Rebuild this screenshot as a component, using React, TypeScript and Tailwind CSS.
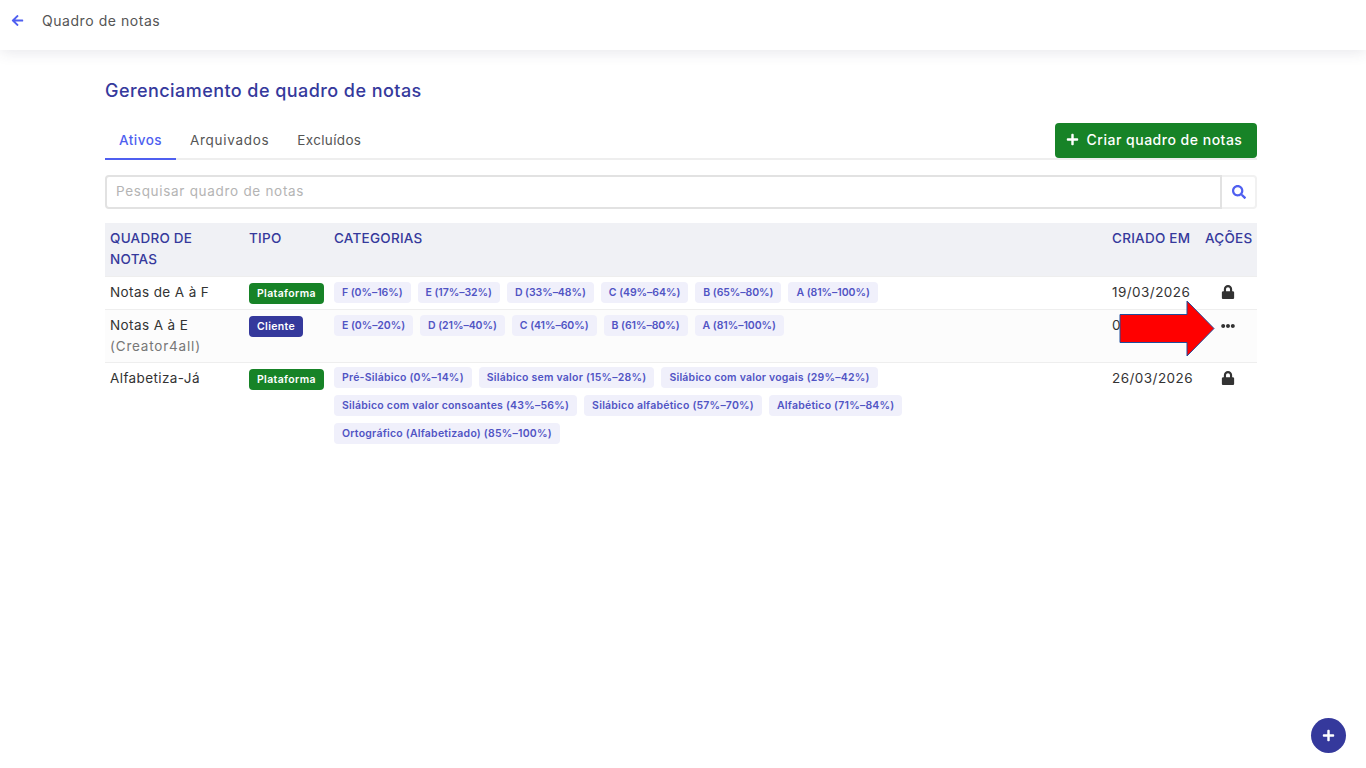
import { FaArrowLeft, FaEllipsisH, FaLock, FaPlus, FaSearch } from "react-icons/fa";

type Row = {
  name: string;
  owner?: string;
  tipo: "Plataforma" | "Cliente";
  categorias: string[];
  data: string;
  editable?: boolean;
};

const rows: Row[] = [
  {
    name: "Notas de A à F",
    tipo: "Plataforma",
    categorias: ["F (0%–16%)", "E (17%–32%)", "D (33%–48%)", "C (49%–64%)", "B (65%–80%)", "A (81%–100%)"],
    data: "19/03/2026",
  },
  {
    name: "Notas A à E",
    owner: "(Creator4all)",
    tipo: "Cliente",
    categorias: ["E (0%–20%)", "D (21%–40%)", "C (41%–60%)", "B (61%–80%)", "A (81%–100%)"],
    data: "03/04/2026",
    editable: true,
  },
  {
    name: "Alfabetiza-Já",
    tipo: "Plataforma",
    categorias: [
      "Pré-Silábico (0%–14%)",
      "Silábico sem valor (15%–28%)",
      "Silábico com valor vogais (29%–42%)",
      "Silábico com valor consoantes (43%–56%)",
      "Silábico alfabético (57%–70%)",
      "Alfabético (71%–84%)",
      "Ortográfico (Alfabetizado) (85%–100%)",
    ],
    data: "26/03/2026",
  },
];

function App() {
  return (
    <div className="relative min-h-screen bg-white font-['Inter',sans-serif] text-[#333]">
      <header className="flex h-[50px] items-center pb-[10px] pl-[11px] shadow-[0_2px_14px_rgba(60,60,90,0.12)]">
        <FaArrowLeft className="h-[13px] w-[13px] text-[#4f5ff0]" />
        <span className="ml-[18px] text-[14px] tracking-[0.55px] text-[#555]">Quadro de notas</span>
      </header>

      <main className="mr-[109px] ml-[105px]">
        <h1 className="mt-[28px] text-[18px] leading-[26px] font-medium tracking-[0.44px] text-[#35399c]">
          Gerenciamento de quadro de notas
        </h1>

        <div className="mt-[19px] flex h-[37px] items-start justify-between border-b-2 border-[#eeeeee]">
          <nav className="flex h-[37px] text-[13.5px] text-[#555]">
            <a className="flex w-[71px] items-center justify-center border-b-2 border-[#4f5ff0] font-medium tracking-[0.5px] text-[#4f5ff0]">
              Ativos
            </a>
            <a className="ml-[14px] flex items-center border-b-2 border-transparent tracking-[0.7px]">Arquivados</a>
            <a className="ml-[28px] flex items-center border-b-2 border-transparent tracking-[0.35px]">Excluídos</a>
          </nav>
          <button className="flex h-[35px] w-[202px] items-center justify-center gap-[8px] rounded bg-[#178327] pr-[4px] pb-[2px] text-[14px] font-medium tracking-[0.5px] text-white">
            <FaPlus className="h-[13px] w-[13px]" />
            Criar quadro de notas
          </button>
        </div>

        <div className="mt-[15px] flex h-[34px]">
          <div className="flex flex-1 items-center rounded-l border-2 border-[#e2e2e2] px-[9px] pb-[1px] text-[13.5px] tracking-[0.7px] text-[#b4b4b4]">
            Pesquisar quadro de notas
          </div>
          <button className="flex w-[35px] items-center justify-center rounded-r border-2 border-l-0 border-[#f1f1f1]">
            <FaSearch className="h-[14px] w-[14px] text-[#4f5ff0]" />
          </button>
        </div>

        <table className="mt-[14px] w-full table-fixed border-collapse text-[13.5px] leading-[21px]">
          <colgroup>
            <col className="w-[140px]" />
            <col className="w-[85px]" />
            <col />
            <col className="w-[93px]" />
            <col className="w-[56px]" />
          </colgroup>
          <thead className="bg-[#f0f1f5] text-left font-medium tracking-[0.25px] text-[#35399c]">
            <tr className="h-[53px] align-top">
              <th className="px-[5px] pt-[5px] font-medium">QUADRO DE NOTAS</th>
              <th className="px-[4px] pt-[5px] font-medium">TIPO</th>
              <th className="px-[4px] pt-[5px] font-medium">CATEGORIAS</th>
              <th className="px-[4px] pt-[5px] font-medium whitespace-nowrap">CRIADO EM</th>
              <th className="px-[4px] pt-[5px] font-medium">AÇÕES</th>
            </tr>
          </thead>
          <tbody>
            {rows.map((row) => (
              <tr key={row.name} className="border-t border-[#eeeeee] align-top even:bg-[#fcfcfc]">
                <td className="px-[5px] pt-[5px] pb-[5px] tracking-[0.4px]">
                  {row.name}
                  {row.owner && <div className="tracking-[0.8px] text-[#777]">{row.owner}</div>}
                </td>
                <td className="px-[4px] pt-[6px]">
                  <div className="flex">
                    <span
                      className={`flex h-[21px] items-center rounded px-[8px] text-[10.5px] font-semibold tracking-[0.35px] text-white ${
                        row.tipo === "Cliente" ? "bg-[#35399c]" : "bg-[#178327]"
                      }`}
                    >
                      {row.tipo}
                    </span>
                  </div>
                </td>
                <td className={`px-[4px] pb-[6px] ${row.categorias.length > 6 ? "pt-[4px]" : "pt-[5px]"}`}>
                  <div className="flex flex-wrap gap-[7px]">
                    {row.categorias.map((categoria) => (
                      <span
                        key={categoria}
                        className={`flex h-[21px] items-center rounded bg-[#f0f0fb] px-[8px] text-[10.5px] font-semibold text-[#5054c4] ${
                          row.categorias.length > 6 ? "tracking-[0.22px]" : "tracking-[-0.05px]"
                        }`}
                      >
                        {categoria}
                      </span>
                    ))}
                  </div>
                </td>
                <td className="px-[4px] pt-[5px] tracking-[0.45px] whitespace-nowrap">{row.data}</td>
                <td className="pt-[8px] pr-[2px]">
                  <div className="flex justify-center">
                    {row.editable ? (
                      <FaEllipsisH className="h-[16px] w-[14px] text-[#333]" />
                    ) : (
                      <FaLock className="h-[14px] w-[14px] text-[#333]" />
                    )}
                  </div>
                </td>
              </tr>
            ))}
          </tbody>
        </table>
      </main>

      {/* seta vermelha da anotação */}
      <svg className="absolute top-[300px] left-[1119px]" width="97" height="58" viewBox="0 0 97 58">
        <path d="M1 14.5H68V1L95 28.5L68 56V42.5H1Z" fill="#ff0000" stroke="#1f4e9c" strokeWidth="1" />
      </svg>

      <button className="absolute top-[718px] left-[1311px] flex h-[35px] w-[35px] items-center justify-center rounded-full bg-[#35399c] text-white">
        <FaPlus className="h-[13px] w-[13px]" />
      </button>
    </div>
  );
}

export default App;
